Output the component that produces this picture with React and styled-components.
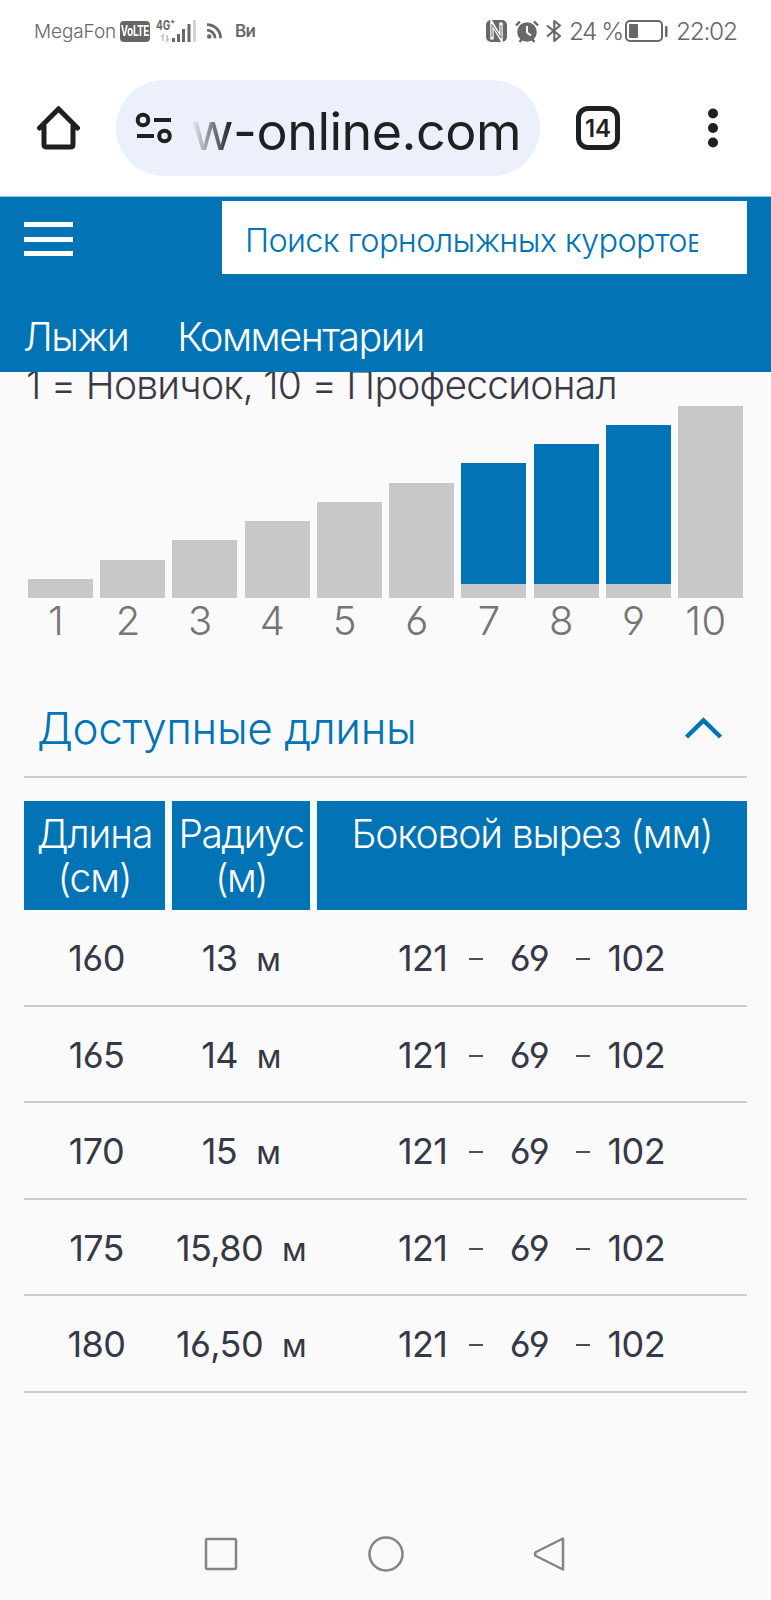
import styled, { createGlobalStyle } from "styled-components";

const GlobalStyle = createGlobalStyle`
  * {
    box-sizing: border-box;
  }
  body {
    margin: 0;
    background-color: #fafafa;
    font-family: "Inter", "Noto Sans", sans-serif;
    font-feature-settings: "cv03", "cv04", "calt" 0;
  }
`;

const Page = styled.div`
  width: 771px;
  height: 1600px;
  display: flex;
  flex-direction: column;
  background-color: #fafafa;
  overflow: hidden;
`;

const StatusBar = styled.div`
  height: 62px;
  padding: 0 35px 0 34px;
  display: flex;
  align-items: center;
  justify-content: space-between;
  flex-shrink: 0;
  background-color: #fff;
  color: #686868;
`;

const StatusGroup = styled.div`
  display: flex;
  align-items: center;
`;

const Carrier = styled.span`
  width: 86px;
  font-size: 19px;
  font-weight: 300;
  letter-spacing: -0.1px;
`;

const VolteBadge = styled.span`
  width: 30px;
  height: 21px;
  border-radius: 4px;
  background-color: #666;
  color: #fff;
  display: flex;
  align-items: center;
  justify-content: center;
`;

const VolteText = styled.span`
  font-family: "Roboto", sans-serif;
  font-size: 10.5px;
  font-weight: 700;
  letter-spacing: -0.3px;
  transform: scaleY(1.35);
`;

const Signal = styled.svg`
  margin-left: 6px;
`;

const Rss = styled.svg`
  margin-left: 10px;
`;

const Beeline = styled.span`
  margin-left: 12px;
  font-size: 17px;
  font-weight: 600;
  letter-spacing: -0.8px;
`;

const StatusIcon = styled.svg`
  margin-right: ${(props) => props.$gap}px;
`;

const StatusText = styled.span`
  width: ${(props) => props.$width}px;
  font-size: 24.5px;
  font-weight: 300;
  letter-spacing: ${(props) => props.$spacing}px;
  white-space: nowrap;
`;

const BrowserBar = styled.div`
  height: 134px;
  padding: 18px 52px 20px 37px;
  display: flex;
  align-items: center;
  flex-shrink: 0;
  background-color: #fff;
`;

const AddressBar = styled.div`
  width: 424px;
  height: 96px;
  margin-left: 36px;
  padding-left: 19px;
  border-radius: 48px;
  background-color: #ecf0fb;
  display: flex;
  align-items: center;
`;

const Address = styled.div`
  width: 335px;
  margin-left: 18px;
  padding-top: 7px;
  font-size: 52px;
  font-weight: 400;
  letter-spacing: -0.5px;
  line-height: 70px;
  color: #1f2022;
  white-space: nowrap;
  mask-image: linear-gradient(to right, transparent 0, #000 40px);
`;

const TabCount = styled.div`
  width: 44px;
  height: 44px;
  margin-left: 36px;
  margin-right: 87px;
  border: 5px solid #1f2022;
  border-radius: 12px;
  display: flex;
  align-items: center;
  justify-content: center;
  font-size: 24px;
  font-weight: 600;
  color: #1f2022;
`;

const SiteHeader = styled.header`
  height: 176px;
  border-top: 1px solid #8cc0de;
  background-color: #0274b5;
  flex-shrink: 0;
`;

const HeaderTop = styled.div`
  display: flex;
  justify-content: space-between;
  padding: 4px 24px 0;
`;

const Burger = styled.div`
  width: 49px;
  margin-top: 21px;
  display: flex;
  flex-direction: column;
  gap: 9.5px;
`;

const BurgerLine = styled.div`
  height: 5px;
  background-color: #fff;
`;

const Search = styled.div`
  width: 525px;
  height: 73px;
  padding: 0 49px 0 23px;
  background-color: #fff;
`;

const Placeholder = styled.div`
  padding-top: 3px;
  font-size: 32.5px;
  font-weight: 300;
  line-height: 73px;
  letter-spacing: -0.65px;
  color: #0274b5;
  white-space: nowrap;
  overflow: hidden;
`;

const HeaderTabs = styled.nav`
  display: flex;
  gap: 49px;
  padding: 27px 23px 0;
  font-size: 39.5px;
  font-weight: 300;
  line-height: 72px;
  color: #fff;
`;

const HeaderTab = styled.span`
  letter-spacing: -1.5px;
`;

const Main = styled.main`
  flex: 1;
  display: flow-root;
  padding: 0 24px;
  overflow: hidden;
`;

const Caption = styled.p`
  height: 42px;
  margin: -9px 0 0;
  padding-left: 2px;
  font-size: 39px;
  font-weight: 300;
  line-height: 43px;
  letter-spacing: -0.75px;
  color: #3a3a46;
  white-space: nowrap;
`;

const Levels = styled.div`
  display: grid;
  grid-template-columns: repeat(10, 65px);
  column-gap: 7.22px;
  padding-left: 4px;
`;

const Level = styled.div`
  display: flex;
  flex-direction: column;
`;

const LevelTrack = styled.div`
  height: 193px;
  display: flex;
  align-items: flex-end;
`;

const LevelBar = styled.div`
  width: 65px;
  background-color: ${(props) => (props.$active ? "#0274b5" : "#c8c8c8")};
  border-bottom: 14px solid #c8c8c8;
`;

const LevelLabel = styled.div`
  padding-right: 9px;
  font-size: 40px;
  font-weight: 300;
  line-height: 45px;
  letter-spacing: 0.5px;
  text-align: center;
  color: #757575;
`;

const SectionTitle = styled.div`
  height: 94px;
  margin-top: 41px;
  padding: 0 24px 4px 13px;
  border-bottom: 2px solid #ccc;
  display: flex;
  align-items: center;
  justify-content: space-between;
  font-size: 44px;
  font-weight: 300;
  letter-spacing: -0.4px;
  color: #0274b5;
`;

const TableHead = styled.div`
  display: grid;
  grid-template-columns: 141px 138px 430px;
  column-gap: 7px;
  margin-top: 23px;
`;

const HeadCell = styled.div`
  height: 109px;
  padding-top: 11px;
  background-color: #0274b5;
  color: #fff;
  font-size: 39px;
  font-weight: 300;
  line-height: 44px;
  letter-spacing: ${(props) => props.$spacing}px;
  text-align: center;
  white-space: nowrap;
`;

const Row = styled.div`
  height: 96.5px;
  padding-top: 2px;
  border-bottom: 2px solid #ccc;
  display: grid;
  grid-template-columns: 141px 138px 267px;
  column-gap: 7px;
  align-items: center;
  font-size: 36px;
  font-weight: 400;
  letter-spacing: -0.6px;
  color: #353846;
`;

const Length = styled.div`
  padding-left: 4px;
  text-align: center;
`;

const Radius = styled.div`
  display: flex;
  align-items: baseline;
  justify-content: center;
  gap: 19px;
`;

const Unit = styled.span`
  font-size: 32px;
`;

const Sidecut = styled.div`
  width: 267px;
  margin-left: 79px;
  display: grid;
  grid-template-columns: repeat(5, 53.4px);
  justify-items: center;
`;

const Centered = styled.span`
  display: flex;
  justify-content: center;
  width: 80px;
  margin: 0 -14px;
`;

const Dash = styled.span`
  width: 14px;
  height: 2px;
  margin-top: 2px;
  align-self: center;
  background-color: #4b4d59;
`;

const SystemNav = styled.footer`
  height: 92px;
  padding: 0 206px 0 204px;
  display: flex;
  align-items: center;
  justify-content: space-between;
  flex-shrink: 0;
`;

const levels = [1, 2, 3, 4, 5, 6, 7, 8, 9, 10];

const skis = [
  { length: 160, radius: "13" },
  { length: 165, radius: "14" },
  { length: 170, radius: "15" },
  { length: 175, radius: "15,80" },
  { length: 180, radius: "16,50" },
];

const App = () => {
  return (
    <>
      <GlobalStyle />
      <Page>
        <StatusBar>
          <StatusGroup>
            <Carrier>MegaFon</Carrier>
            <VolteBadge>
              <VolteText>VoLTE</VolteText>
            </VolteBadge>
            <Signal width="41" height="26" viewBox="0 0 41 26">
              <text
                x="0"
                y="12"
                fontSize="13"
                fontWeight="700"
                fill="#686868"
                textLength="19"
                lengthAdjust="spacingAndGlyphs"
              >
                4G⁺
              </text>
              <path
                d="M7 23v-6l-2 2M11 17v6l2-2"
                stroke="#c4c4c4"
                strokeWidth="1.6"
                fill="none"
              />
              <path
                d="M17.5 24v-4M22.5 24v-8M27.5 24v-13M33 24V6"
                stroke="#686868"
                strokeWidth="3"
              />
              <path d="M38.5 24V2" stroke="#d2d2d2" strokeWidth="3" />
            </Signal>
            <Rss width="16" height="16" viewBox="0 0 16 16">
              <circle cx="2.2" cy="13.5" r="2.2" fill="#686868" />
              <path
                d="M0 7.2a8 8 0 0 1 8 8M0 1.6a13.6 13.6 0 0 1 13.6 13.6"
                stroke="#686868"
                strokeWidth="2.8"
                fill="none"
              />
            </Rss>
            <Beeline>Ви</Beeline>
          </StatusGroup>
          <StatusGroup>
            <StatusIcon $gap={8} width="21" height="22" viewBox="0 0 21 22">
              <rect width="21" height="22" rx="5" fill="#686868" />
              <path
                d="M6 19.5V3.5L15 18.5V2.5"
                stroke="#fff"
                strokeWidth="3.4"
                fill="none"
              />
              <path
                d="M6 17V4.5L15 18V5"
                stroke="#686868"
                strokeWidth="1"
                fill="none"
              />
            </StatusIcon>
            <StatusIcon $gap={7} width="24" height="23" viewBox="0 0 24 23">
              <circle cx="12" cy="12" r="9.8" fill="#686868" />
              <path
                d="M1 5.5 5 1.5M23 5.5 19 1.5M4.5 22l2.5-3M19.5 22 17 19"
                stroke="#686868"
                strokeWidth="2.4"
              />
              <path d="M12 6v6.5l4 3" stroke="#fff" strokeWidth="2" fill="none" />
            </StatusIcon>
            <StatusIcon $gap={7} width="16" height="24" viewBox="0 0 16 24">
              <path
                d="M1 6.5 14 17 8.3 22V2L14 6.5 1 17.5"
                stroke="#686868"
                strokeWidth="2.2"
                fill="none"
                strokeLinejoin="round"
              />
            </StatusIcon>
            <StatusText $width={56} $spacing={-1.6}>
              24 %
            </StatusText>
            <StatusIcon $gap={8} width="43" height="22" viewBox="0 0 43 22">
              <rect
                x="1"
                y="1"
                width="36"
                height="20"
                rx="4"
                stroke="#686868"
                strokeWidth="2"
                fill="none"
              />
              <rect x="4" y="4" width="9" height="14" rx="1" fill="#686868" />
              <rect x="40" y="6" width="2.5" height="11" rx="1" fill="#686868" />
            </StatusIcon>
            <StatusText $width={60} $spacing={-1.3}>
              22:02
            </StatusText>
          </StatusGroup>
        </StatusBar>

        <BrowserBar>
          <svg width="43" height="44" viewBox="0 0 43 44">
            <path
              d="M2.5 22 21.5 3 40.5 22M7 20v18.5q0 2.5 2.5 2.5h24q2.5 0 2.5-2.5V20"
              stroke="#1f2022"
              strokeWidth="5"
              strokeLinecap="round"
              fill="none"
            />
          </svg>
          <AddressBar>
            <svg width="38" height="32" viewBox="0 0 38 32">
              <g stroke="#1f2022" strokeWidth="4" fill="none">
                <circle cx="8" cy="8" r="5.3" />
                <circle cx="29.5" cy="24" r="5.3" />
                <path d="M19 8h17M2 24h17" />
              </g>
            </svg>
            <Address>w-online.com</Address>
          </AddressBar>
          <TabCount>14</TabCount>
          <svg width="12" height="40" viewBox="0 0 12 40">
            <circle cx="6" cy="5.5" r="5" fill="#1f2022" />
            <circle cx="6" cy="20" r="5" fill="#1f2022" />
            <circle cx="6" cy="34.5" r="5" fill="#1f2022" />
          </svg>
        </BrowserBar>

        <SiteHeader>
          <HeaderTop>
            <Burger>
              <BurgerLine />
              <BurgerLine />
              <BurgerLine />
            </Burger>
            <Search>
              <Placeholder>Поиск горнолыжных курортов</Placeholder>
            </Search>
          </HeaderTop>
          <HeaderTabs>
            <HeaderTab>Лыжи</HeaderTab>
            <HeaderTab>Комментарии</HeaderTab>
          </HeaderTabs>
        </SiteHeader>

        <Main>
          <Caption>1 = Новичок, 10 = Профессионал</Caption>
          <Levels>
            {levels.map((level) => (
              <Level key={level}>
                <LevelTrack>
                  <LevelBar
                    $active={level >= 7 && level <= 9}
                    style={{ height: level * 19.25 }}
                  />
                </LevelTrack>
                <LevelLabel>{level}</LevelLabel>
              </Level>
            ))}
          </Levels>

          <SectionTitle>
            Доступные длины
            <svg width="39" height="22" viewBox="0 0 39 22">
              <path
                d="M2.5 20 19.5 3.5 36.5 20"
                stroke="#0274b5"
                strokeWidth="4.5"
                fill="none"
              />
            </svg>
          </SectionTitle>

          <TableHead>
            <HeadCell $spacing={-1.1}>
              Длина
              <br />
              (см)
            </HeadCell>
            <HeadCell $spacing={-1.6}>
              Радиус
              <br />
              (м)
            </HeadCell>
            <HeadCell $spacing={-1.1}>Боковой вырез (мм)</HeadCell>
          </TableHead>
          {skis.map((ski) => (
            <Row key={ski.length}>
              <Length>{ski.length}</Length>
              <Radius>
                <span>{ski.radius}</span>
                <Unit>м</Unit>
              </Radius>
              <Sidecut>
                <Centered>121</Centered>
                <Dash />
                <Centered>69</Centered>
                <Dash />
                <Centered>102</Centered>
              </Sidecut>
            </Row>
          ))}
        </Main>

        <SystemNav>
          <svg width="34" height="34" viewBox="0 0 34 34">
            <rect
              x="2"
              y="2"
              width="30"
              height="30"
              rx="1.5"
              stroke="#858585"
              strokeWidth="2.5"
              fill="none"
            />
          </svg>
          <svg width="36" height="36" viewBox="0 0 36 36">
            <circle
              cx="18"
              cy="18"
              r="16.5"
              stroke="#858585"
              strokeWidth="2.5"
              fill="none"
            />
          </svg>
          <svg width="32" height="36" viewBox="0 0 32 36">
            <path
              d="M30 2.5v31L3 20q-2-2 0-4z"
              stroke="#858585"
              strokeWidth="2.5"
              strokeLinejoin="round"
              fill="none"
            />
          </svg>
        </SystemNav>
      </Page>
    </>
  );
};

export default App;
